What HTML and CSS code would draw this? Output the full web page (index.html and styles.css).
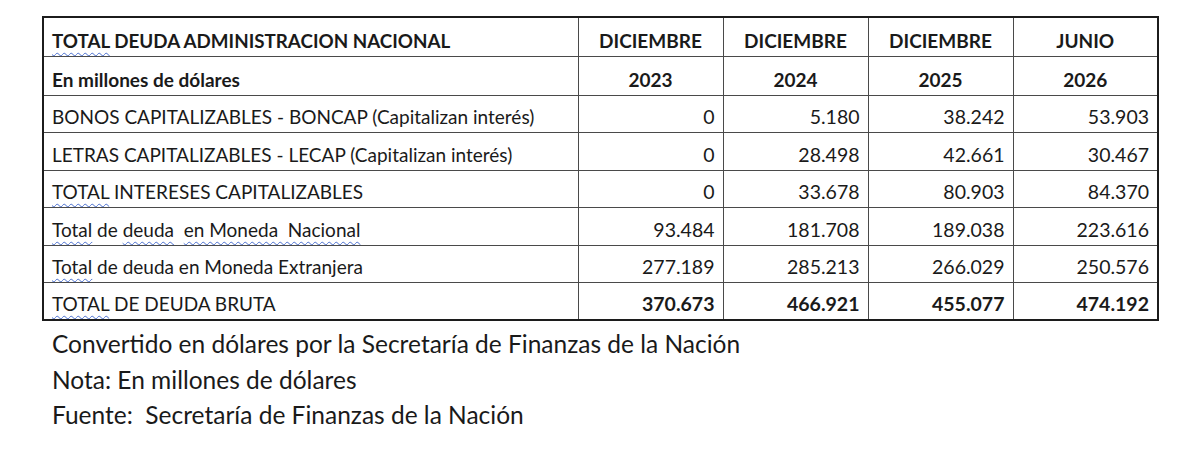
FILE: index.html
```html
<!DOCTYPE html>
<html lang="es">
<head>
<meta charset="utf-8">
<title>Total deuda administración nacional</title>
<link rel="stylesheet" href="styles.css">
</head>
<body>
<div class="page">
  <table class="debt">
    <colgroup>
      <col class="c-label">
      <col class="c-num">
      <col class="c-num">
      <col class="c-num">
      <col class="c-num">
    </colgroup>
    <thead>
      <tr class="hrow">
        <th class="label title"><span class="sp">TOTAL</span> DEUDA ADMINISTRACION NACIONAL</th>
        <th>DICIEMBRE</th>
        <th>DICIEMBRE</th>
        <th>DICIEMBRE</th>
        <th>JUNIO</th>
      </tr>
      <tr class="hrow">
        <th class="label">En millones de dólares</th>
        <th>2023</th>
        <th>2024</th>
        <th>2025</th>
        <th>2026</th>
      </tr>
    </thead>
    <tbody>
      <tr>
        <td class="label">BONOS CAPITALIZABLES - BONCAP (Capitalizan interés)</td>
        <td>0</td><td>5.180</td><td>38.242</td><td>53.903</td>
      </tr>
      <tr>
        <td class="label">LETRAS CAPITALIZABLES - LECAP (Capitalizan interés)</td>
        <td>0</td><td>28.498</td><td>42.661</td><td>30.467</td>
      </tr>
      <tr>
        <td class="label"><span class="sp">TOTAL</span> INTERESES CAPITALIZABLES</td>
        <td>0</td><td>33.678</td><td>80.903</td><td>84.370</td>
      </tr>
      <tr>
        <td class="label"><span class="sp">Total</span> de <span class="sp">deuda</span>&nbsp; <span class="sp">en Moneda&nbsp; Nacional</span></td>
        <td>93.484</td><td>181.708</td><td>189.038</td><td>223.616</td>
      </tr>
      <tr>
        <td class="label"><span class="sp">Total</span> de deuda en Moneda Extranjera</td>
        <td>277.189</td><td>285.213</td><td>266.029</td><td>250.576</td>
      </tr>
      <tr class="total">
        <td class="label"><span class="sp">TOTAL</span> DE DEUDA BRUTA</td>
        <td>370.673</td><td>466.921</td><td>455.077</td><td>474.192</td>
      </tr>
    </tbody>
  </table>
  <div class="notes">
    <p>Convertido en dólares por la Secretaría de Finanzas de la Nación</p>
    <p>Nota: En millones de dólares</p>
    <p>Fuente:&nbsp; Secretaría de Finanzas de la Nación</p>
  </div>
</div>
</body>
</html>
```

FILE: styles.css
```css
html, body {
  margin: 0;
  padding: 0;
  background: #ffffff;
}

body {
  font-family: Lato, "Liberation Sans", sans-serif;
  color: #1a1a1a;
}

.page {
  padding: 16px 0 0 42px;
}

.debt {
  border-collapse: collapse;
  border: 2px solid #1c1c1c;
  table-layout: fixed;
  width: 1116px;
  font-size: 19px;
}

.c-label {
  width: 535px;
}

.c-num {
  width: 145px;
}

.debt th,
.debt td {
  border: 1px solid #4a4a4a;
  padding: 0 8px 4px 8px;
  vertical-align: bottom;
  white-space: nowrap;
  overflow: hidden;
}

.debt th {
  font-weight: 700;
  text-align: center;
  height: 39px;
  box-sizing: border-box;
}

.debt td {
  text-align: right;
  height: 37.5px;
  box-sizing: border-box;
}

.debt td:not(.label) {
  font-size: 19.5px;
}

.debt .label {
  text-align: left;
}

.debt .title {
  font-weight: 700;
  font-size: 18.8px;
}

.debt .total td {
  font-weight: 700;
}

.debt .total td.label {
  font-weight: 400;
}

.sp {
  text-decoration: underline wavy #4a6fd0;
  text-decoration-thickness: 1px;
  text-underline-offset: 4px;
  text-decoration-skip-ink: none;
}

.notes {
  padding: 5px 0 0 10px;
  font-size: 24.5px;
}

.notes p {
  margin: 0;
  line-height: 35.6px;
}
```
